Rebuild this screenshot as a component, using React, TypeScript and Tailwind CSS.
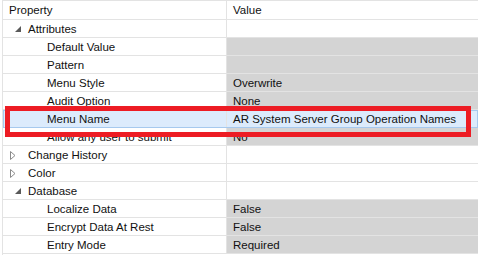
import React from "react";

type Row = {
  label: string;
  value?: string;
  level: 0 | 1;
  kind?: "open" | "closed";
  readOnly?: boolean;
  selected?: boolean;
};

const rows: Row[] = [
  { label: "Attributes", level: 0, kind: "open" },
  { label: "Default Value", level: 1, readOnly: true },
  { label: "Pattern", level: 1, readOnly: true },
  { label: "Menu Style", value: "Overwrite", level: 1, readOnly: true },
  { label: "Audit Option", value: "None", level: 1, readOnly: true },
  { label: "Menu Name", value: "AR System Server Group Operation Names", level: 1, selected: true },
  { label: "Allow any user to submit", value: "No", level: 1, readOnly: true },
  { label: "Change History", level: 0, kind: "closed" },
  { label: "Color", level: 0, kind: "closed" },
  { label: "Database", level: 0, kind: "open" },
  { label: "Localize Data", value: "False", level: 1, readOnly: true },
  { label: "Encrypt Data At Rest", value: "False", level: 1, readOnly: true },
  { label: "Entry Mode", value: "Required", level: 1, readOnly: true },
];

function Expander({ kind }: { kind?: "open" | "closed" }) {
  if (kind === "open") {
    return (
      <svg width="7" height="7" viewBox="0 0 7 7" className="absolute left-[12px] top-[6px]">
        <path d="M6 0 L6 6 L0 6 Z" fill="#595959" />
      </svg>
    );
  }
  return (
    <svg width="6" height="9" viewBox="0 0 6 9" className="absolute left-[7px] top-[5px]">
      <path d="M0.5 0.5 L5 4.5 L0.5 8.5 Z" fill="none" stroke="#8a8a8a" strokeWidth="1" />
    </svg>
  );
}

function GridRow({ row }: { row: Row }) {
  return (
    <div
      className={
        "flex h-[18px] border-b border-[#e3e3e3] " +
        (row.selected ? "bg-[#dcebfc] outline outline-1 outline-[#a6c9ee] -outline-offset-1" : "bg-white")
      }
    >
      <div className="relative w-[224px] shrink-0 border-r border-[#e3e3e3]">
        {row.level === 0 && <Expander kind={row.kind} />}
        <span
          className={
            "absolute top-[1px] whitespace-nowrap " + (row.level === 0 ? "left-[25px]" : "left-[44px]")
          }
        >
          {row.label}
        </span>
      </div>
      <div
        className={
          "flex-1 pl-[6px] pt-[1px] whitespace-nowrap " +
          (row.readOnly ? "bg-[#d4d4d4]" : "")
        }
      >
        {row.value}
      </div>
    </div>
  );
}

export default function App() {
  return (
    <div
      className="relative w-[478px] h-[255px] overflow-hidden bg-white pl-[2px] text-[11.5px] leading-[16px] text-[#111]"
      style={{ fontFamily: '"Segoe UI", "Liberation Sans", Arial, sans-serif' }}
    >
      <div className="border-l border-t border-[#e3e3e3] h-full">
        <div className="flex h-[19px] border-b border-[#e3e3e3] bg-white">
          <div className="w-[224px] shrink-0 border-r border-[#e3e3e3] pl-[6px] pt-[1px]">Property</div>
          <div className="flex-1 pl-[6px] pt-[1px]">Value</div>
        </div>
        {rows.map((r) => (
          <GridRow key={r.label} row={r} />
        ))}
      </div>
      <div className="absolute left-[5px] top-[106px] w-[466px] h-[31px] border-[5px] border-[#ed1c24]" />
    </div>
  );
}
